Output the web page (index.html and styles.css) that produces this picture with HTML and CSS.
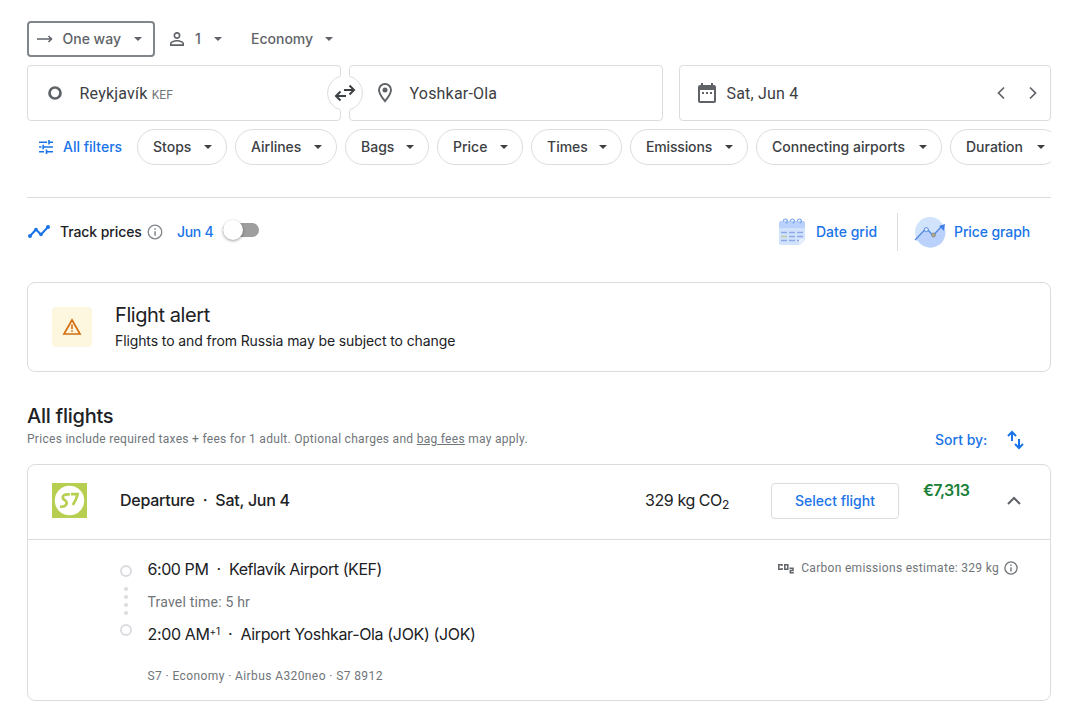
FILE: index.html
```html
<!DOCTYPE html>
<html lang="en">
<head>
<meta charset="utf-8">
<title>Flights</title>
<link rel="stylesheet" href="styles.css">
</head>
<body>
<main class="page">
  <div class="trip">
    <button class="trip-way"><svg width="16" height="10" viewBox="0 0 16 10" fill="none" stroke="currentColor" stroke-width="1.5"><path d="M0 5h15M11.500 2 14.500 5l-3 3"/></svg><span class="t-way">One way</span><i class="caret"></i></button>
    <button class="trip-people"><svg width="14" height="14" viewBox="4 4 16 16" fill="currentColor"><path d="M12 5.9a2.1 2.1 0 1 1 0 4.2 2.1 2.1 0 0 1 0-4.2m0 9c2.97 0 6.1 1.46 6.1 2.1v1.1H5.9V17c0-.64 3.13-2.1 6.1-2.1M12 4C9.79 4 8 5.79 8 8s1.79 4 4 4 4-1.790 4-4-1.790-4-4-4zm0 9c-2.670 0-8 1.340-8 4v3h16v-3c0-2.660-5.330-4-8-4z"/></svg><span>1</span><i class="caret"></i></button>
    <button class="trip-class"><span class="t-econ">Economy</span><i class="caret"></i></button>
  </div>

  <div class="search">
    <div class="field from">
      <svg width="16" height="16" viewBox="0 0 16 16"><circle cx="8" cy="8" r="5.5" fill="none" stroke="#5f6368" stroke-width="2.700"/></svg>
      <span class="place">Reykjavík <small>KEF</small></span>
      <svg class="swap" width="36" height="36" viewBox="0 0 36 36" fill="none"><circle cx="18" cy="18" r="18" fill="#fff"/><path d="M13.500 1.100A17.500 17.500 0 0 0 13.500 34.900M22.500 1.100A17.500 17.500 0 0 1 22.500 34.900" stroke="#dadce0"/><path d="M17 15h10M22.500 10.500l4.500 4.500-4.500 4.500M19 21H9M13.500 16.500 9 21l4.500 4.500" stroke="#3c4043" stroke-width="2"/></svg>
    </div>
    <div class="field to">
      <svg width="16" height="22" viewBox="0 0 16 22"><path d="M8 2C4.600 2 2 4.600 2 8c0 4 4 8.700 6 11.200C10 16.700 14 12 14 8c0-3.400-2.600-6-6-6z" fill="none" stroke="#5f6368" stroke-width="1.900"/><circle cx="8" cy="8" r="2.500" fill="#5f6368"/></svg>
      <span class="place">Yoshkar-Ola</span>
    </div>
    <div class="field date">
      <svg width="18" height="20" viewBox="0 0 18 20" fill="#5f6368"><path fill-rule="evenodd" d="M3 0h2v2h8V0h2v2h1a2 2 0 0 1 2 2v14a2 2 0 0 1-2 2H2a2 2 0 0 1-2-2V4a2 2 0 0 1 2-2h1zM2 7v11h14V7z"/><path d="M4 9h2v2H4zm4 0h2v2H8zm4 0h2v2h-2z"/></svg>
      <span class="place">Sat, Jun 4</span>
      <svg class="step" width="40" height="14" viewBox="0 0 40 14" fill="none" stroke="#5f6368" stroke-width="1.700"><path d="M7 1.500 1.500 7 7 12.500M33 1.500 38.500 7 33 12.500"/></svg>
    </div>
  </div>

  <div class="filters">
    <div class="all"><svg width="16" height="14" viewBox="0 0 16 14" fill="none" stroke="currentColor" stroke-width="1.600"><path d="M1 2.200h8M11 2.200h4M11 0v4.500M1 7h2.500M6 7h9M5.200 4.700v4.600M1 11.800h5M8.500 11.800H15M8.500 9.500V14"/></svg><span class="t-all">All filters</span></div>
    <button class="chip c1"><span>Stops</span><i class="caret"></i></button>
    <button class="chip c2"><span>Airlines</span><i class="caret"></i></button>
    <button class="chip c3"><span>Bags</span><i class="caret"></i></button>
    <button class="chip c4"><span>Price</span><i class="caret"></i></button>
    <button class="chip c5"><span>Times</span><i class="caret"></i></button>
    <button class="chip c6"><span>Emissions</span><i class="caret"></i></button>
    <button class="chip c7"><span>Connecting airports</span><i class="caret"></i></button>
    <button class="chip c8"><span>Duration</span><i class="caret"></i></button>
  </div>

  <div class="tools">
    <svg class="trend" width="22" height="13" viewBox="0 0 22 13" fill="none" stroke="#1a73e8" stroke-width="2"><path d="M2 11 8 4.500l5 5L20 2"/><g fill="#1a73e8" stroke="none"><circle cx="2" cy="11" r="2"/><circle cx="8" cy="4.500" r="1.800"/><circle cx="13" cy="9.500" r="1.800"/><circle cx="20" cy="2" r="2"/></g></svg>
    <span class="t-track">Track prices</span>
    <svg class="info" width="16" height="16" viewBox="0 0 16 16"><circle cx="8" cy="8" r="6.800" fill="none" stroke="#80868b" stroke-width="1.300"/><path d="M7.300 4.300h1.500v1.500H7.300zm0 2.900h1.500v4.500H7.300z" fill="#80868b"/></svg>
    <span class="t-jun">Jun 4</span>
    <span class="toggle"><i></i></span>
    <div class="views">
      <svg width="28" height="28" viewBox="0 0 28 28"><path d="M1 5a2 2 0 0 1 2-2h22a2 2 0 0 1 2 2v17l-5 5H3a2 2 0 0 1-2-2z" fill="#d2e3fc"/><path d="M1 10V5a2 2 0 0 1 2-2h22a2 2 0 0 1 2 2v5z" fill="#b9d1fb"/><path d="m27 21-6 6v-4a2 2 0 0 1 2-2z" fill="#e8f0fe"/><g fill="none" stroke="#7ba7ee" stroke-width="1.200"><path d="M5.500 3.500a2 2 0 1 1 2 1.500M12.500 3.500a2 2 0 1 1 2 1.500M19.500 3.500a2 2 0 1 1 2 1.500"/></g><g fill="none" stroke-width="1.700"><path d="M3 14.500h6M11 14.500h6M19 14.500h6M11 18.500h6M19 18.500h6M3 22.500h6M11 22.500h6M19 22.500h2" stroke="#8ea9e6"/><path d="M3 18.500h6" stroke="#c3cba8"/></g></svg>
      <span class="t-grid">Date grid</span>
      <i class="rule"></i>
      <svg class="graph" width="32" height="32" viewBox="0 0 32 32"><circle cx="16" cy="16" r="15" fill="#d2e3fc"/><path d="M1.500 24 12 13l7 7 8-10 4 3a15 15 0 0 1-27 12z" fill="#b9d1fb"/><path d="m1 24 10-10.500q1.500-1.500 3 .5l5 5.500L28 10" fill="none" stroke="#5086df" stroke-width="1.200"/><circle cx="12.300" cy="13.600" r="2" fill="#e8f0fe" stroke="#5086df"/><circle cx="19.500" cy="19" r="2" fill="#b8a67a" stroke="#7c8a9c" stroke-width=".8"/><path d="m31 8-1 7-5-5z" fill="#4280e8"/></svg>
      <span class="t-graph">Price graph</span>
    </div>
  </div>

  <section class="alert">
    <div class="alert-icon"><svg width="20" height="18" viewBox="0 0 20 18"><path d="M10 2 18 16H2z" fill="none" stroke="#d56e0c" stroke-width="1.700"/><path d="M9.200 6.500h1.600v4.500H9.200zm0 5.700h1.600v1.600H9.200z" fill="#d56e0c"/></svg></div>
    <div><h2>Flight alert</h2><p>Flights to and from Russia may be subject to change</p></div>
  </section>

  <header class="results">
    <div><h1>All flights</h1><p>Prices include required taxes + fees for 1 adult. Optional charges and <u>bag fees</u> may apply.</p></div>
    <div class="sort"><span>Sort by:</span><svg width="17" height="20" viewBox="0 0 17 20" fill="none" stroke="currentColor" stroke-width="2"><path d="M5 11V2M1 6l4-4 4 4M12 9v9M8 14l4 4 4-4"/></svg></div>
  </header>

  <article class="card">
    <div class="card-head">
      <svg class="logo" width="35" height="35" viewBox="0 0 35 35"><path d="M0 0h35v35H0z" fill="#b7cf50"/><circle cx="17.500" cy="17.500" r="14.700" fill="#fff"/><path d="M17.800 11.300h-2.600c-3.200 0-5 1.900-4.300 3.900.6 1.800 4 2.200 3.800 5-.2 2.500-2.700 3.700-6.700 3.500M19 11.200h6.600c-.8 4-2.400 7.300-4.800 10.800" fill="none" stroke="#b7cf50" stroke-width="2.700"/></svg>
      <span class="t-dep">Departure&nbsp; ·&nbsp; Sat, Jun 4</span>
      <span class="t-co">329 kg CO<sub>2</sub></span>
      <button class="select">Select flight</button>
      <span class="price">€7,313</span>
      <svg class="up" width="14" height="9" viewBox="0 0 14 9" fill="none" stroke="#5f6368" stroke-width="2"><path d="m1 8 6-6 6 6"/></svg>
    </div>
    <div class="card-body">
      <svg class="line" width="12" height="72" viewBox="0 0 12 72"><g fill="none" stroke="#dadce0" stroke-width="2"><circle cx="6" cy="6" r="5"/><circle cx="6" cy="65" r="5"/></g><g fill="#dadce0"><circle cx="6" cy="24" r="2"/><circle cx="6" cy="32" r="2"/><circle cx="6" cy="40" r="2"/><circle cx="6" cy="48" r="2"/></g></svg>
      <div class="legs">
        <p class="leg t-kef">6:00 PM&nbsp; ·&nbsp; Keflavík Airport (KEF)</p>
        <p class="travel">Travel time: 5 hr</p>
        <p class="leg t-jok">2:00 AM<sup>+1</sup>&nbsp; ·&nbsp; Airport Yoshkar-Ola (JOK) (JOK)</p>
        <p class="meta">S7 · Economy · Airbus A320neo · S7 8912</p>
      </div>
      <div class="carbon"><svg width="18" height="12" viewBox="0 0 18 12" fill="none" stroke="#5f6368" stroke-width="1.500"><path d="M5 4V2.700H1.800v4.600H5V6M7.800 2.700h3v4.600h-3zM12.500 6.200h3.500v2.300H13.300v2.300h3.500"/></svg><span>Carbon emissions estimate: 329 kg</span><svg width="14" height="14" viewBox="0 0 16 16"><circle cx="8" cy="8" r="7" fill="none" stroke="#70757a" stroke-width="1.500"/><path d="M7.200 4h1.600v1.600H7.200zm0 3h1.600v5H7.200z" fill="#70757a"/></svg></div>
    </div>
  </article>
</main>
</body>
</html>
```
FILE: styles.css
```css
* { box-sizing: border-box; }
body { margin: 0; background: #fff; color: #202124; font: 500 14px/20px Inter, sans-serif; }
h1, h2, p { margin: 0; }
svg { display: block; flex: none; }
button { font: inherit; color: inherit; background: #fff; border: 0; padding: 0; margin: 0; display: flex; align-items: center; white-space: nowrap; }
.page { width: 1068px; height: 717px; overflow: hidden; padding: 21px 17px 0 27px; }
.caret { flex: none; width: 0; height: 0; border: 4px solid transparent; border-top-color: currentColor; border-bottom: 0; }

.trip { display: flex; height: 36px; color: #5f6368; letter-spacing: -.1px; }
.trip-way { width: 128px; border: 2px solid #80868b; border-radius: 4px; padding: 0 11px 0 8px; }
.trip-way span { margin-left: 9.5px; }
.trip-way .caret, .trip-class .caret { margin-left: auto; }
.trip-people { width: 96px; padding-left: 15px; }
.trip-people span { margin: 0 12px 0 10px; width: 8px; }
.trip-class { width: 82px; }

.search { display: flex; margin-top: 8px; }
.field { position: relative; display: flex; align-items: center; height: 56px; border: 1px solid #dadce0; border-radius: 4px; color: #3c4043; font: 400 16px/24px Roboto, sans-serif; letter-spacing: .2px; }
.place { padding-top: 2px; }
.from { width: 314px; padding-left: 19px; }
.from .place { margin-left: 16.5px; }
.from small { font-size: 12px; color: #70757a; }
.swap { position: absolute; left: 299px; top: 9px; z-index: 1; }
.to { width: 314px; margin-left: 8px; padding-left: 27px; }
.to .place { margin-left: 16.5px; }
.date { width: 372px; margin-left: 16px; padding: 0 13px 0 18px; }
.date .place { margin-left: 10.5px; }
.step { margin-left: auto; }

.filters { display: flex; gap: 8px; margin-top: 8px; width: 1024px; overflow: hidden; }
.all { display: flex; align-items: center; width: 102px; padding-left: 11px; color: #1a73e8; }
.all span { margin-left: 9px; white-space: nowrap; }
.all, .chip { flex: none; height: 36px; }
.chip { justify-content: space-between; padding: 0 14px 0 15px; border: 1px solid #dadce0; border-radius: 18px; color: #3c4043; }
.c1 { width: 90px; }
.c2 { width: 102px; }
.c3 { width: 84px; }
.c4 { width: 86px; }
.c5 { width: 91px; }
.c6 { width: 118px; letter-spacing: -.15px; }
.c7 { width: 186px; }
.c8 { width: 110px; }

.tools { display: flex; align-items: center; height: 68px; margin-top: 32px; border-top: 1px solid #dadce0; }
.trend { margin-left: 1px; }
.t-track { margin-left: 10px; width: 87px; white-space: nowrap; letter-spacing: -.1px; }
.t-jun { margin-left: 14px; width: 37px; color: #1a73e8; white-space: nowrap; letter-spacing: -.3px; }
.toggle { width: 36px; height: 14px; margin: -4px 0 0 9px; border-radius: 7px; background: #9e9e9e; }
.toggle i { display: block; width: 20px; height: 20px; margin: -3px 0 0 0; border-radius: 50%; background: #fff; box-shadow: 0 1px 3px rgba(0, 0, 0, .4); }
.views { display: flex; align-items: center; margin-left: auto; width: 273px; color: #1a73e8; white-space: nowrap; }
.t-grid { margin-left: 10px; width: 81px; }
.rule { width: 1px; height: 38px; background: #dadce0; }
.graph { margin-left: 16px; }
.t-graph { margin-left: 8px; letter-spacing: -.1px; }

.alert { display: flex; height: 90px; margin-top: 17px; padding: 20px 24px; border: 1px solid #dadce0; border-radius: 8px; }
.alert-icon { display: grid; place-items: center; width: 40px; height: 40px; margin: 4px 23px 0 0; border-radius: 4px; background: #fef7e0; }
.alert h2 { font-size: 20px; line-height: 24px; font-weight: 400; letter-spacing: -.42px; }
.alert p { margin-top: 4px; font-weight: 400; letter-spacing: -.11px; }

.results { display: flex; justify-content: space-between; margin-top: 30px; height: 62px; }
.results h1 { font-size: 20px; line-height: 28px; font-weight: 500; letter-spacing: -.25px; }
.results p { font: 400 12px/16px Roboto, sans-serif; letter-spacing: .29px; color: #70757a; margin-top: 1px; }
.sort { display: flex; gap: 20px; align-items: center; height: 20px; margin: 28px 27px 0 0; color: #1a73e8; }
.sort span { width: 52px; white-space: nowrap; }

.card { height: 237px; border: 1px solid #dadce0; border-radius: 8px; }
.card-head { display: flex; height: 75px; align-items: center; padding: 0 0 2px 24px; border-bottom: 1px solid #dadce0; white-space: nowrap; font-size: 16px; line-height: 24px; }
.logo { margin-top: -2px; }
.t-dep { margin-left: 33px; width: 525px; letter-spacing: -.25px; margin-top: -2px; }
.t-co { width: 126px; font-weight: 400; letter-spacing: -.42px; margin-top: -2px; }
.t-co sub { font-size: 12px; line-height: 0; vertical-align: -3px; }
.select { justify-content: center; width: 128px; height: 36px; border: 1px solid #dadce0; border-radius: 4px; color: #1a73e8; font-size: 14px; }
.price { margin: -22px 0 0 24px; width: 84px; color: #188038; font-weight: 600; letter-spacing: -.6px; }
.up { margin-top: -2px; }
.card-body { display: flex; padding: 17px 32px 0 92px; }
.line { margin-top: 8px; }
.legs { margin-left: 15px; padding-left: .5px; white-space: nowrap; }
.leg { font-size: 16px; line-height: 24px; font-weight: 400; letter-spacing: -.42px; }
.t-jok { letter-spacing: -.35px; }
.leg sup { font-size: 10px; line-height: 0; vertical-align: 5px; }
.travel { font: 400 14px/20px Roboto, sans-serif; color: #70757a; margin: 11px 0 10px; letter-spacing: .2px; }
.meta { font: 400 12px/16px Roboto, sans-serif; color: #70757a; margin-top: 22px; letter-spacing: .4px; }
.carbon { display: flex; align-items: center; height: 16px; margin: 3px 0 0 auto; font: 400 12px/16px Roboto, sans-serif; letter-spacing: .3px; color: #70757a; }
.carbon span { margin: 0 5px 0 6px; }
```
